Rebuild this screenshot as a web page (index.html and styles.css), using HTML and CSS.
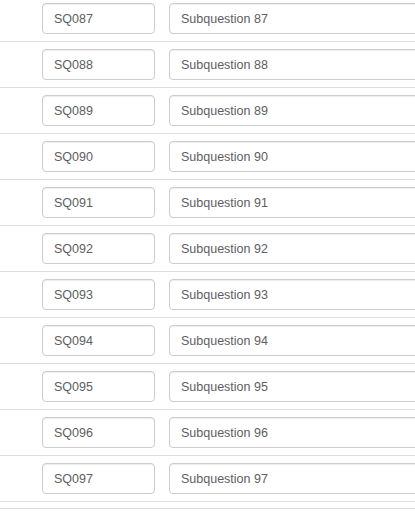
FILE: index.html
```html
<!DOCTYPE html>
<html lang="en">
<head>
    <meta charset="UTF-8">
    <meta name="viewport" content="width=device-width, initial-scale=1.0">
    <title>Subquestions</title>
    <link rel="stylesheet" href="styles.css">
</head>
<body>
    <div class="answers">
        <div class="row"><input class="field code" value="SQ087"><input class="field text" value="Subquestion 87"></div>
        <div class="row"><input class="field code" value="SQ088"><input class="field text" value="Subquestion 88"></div>
        <div class="row"><input class="field code" value="SQ089"><input class="field text" value="Subquestion 89"></div>
        <div class="row"><input class="field code" value="SQ090"><input class="field text" value="Subquestion 90"></div>
        <div class="row"><input class="field code" value="SQ091"><input class="field text" value="Subquestion 91"></div>
        <div class="row"><input class="field code" value="SQ092"><input class="field text" value="Subquestion 92"></div>
        <div class="row"><input class="field code" value="SQ093"><input class="field text" value="Subquestion 93"></div>
        <div class="row"><input class="field code" value="SQ094"><input class="field text" value="Subquestion 94"></div>
        <div class="row"><input class="field code" value="SQ095"><input class="field text" value="Subquestion 95"></div>
        <div class="row"><input class="field code" value="SQ096"><input class="field text" value="Subquestion 96"></div>
        <div class="row"><input class="field code" value="SQ097"><input class="field text" value="Subquestion 97"></div>
        <div class="footer"></div>
    </div>
</body>
</html>
```

FILE: styles.css
```css
body {
    font-family: "Liberation Sans", Arial, sans-serif;
    background-color: #fff;
    margin: 0;
    padding: 0;
    overflow: hidden;
}
.answers {
    margin-top: -4px;
}
.row {
    display: flex;
    gap: 14px;
    padding: 7px 0 7px 42px;
    border-bottom: 1px solid #ddd;
}
.footer {
    height: 6px;
    border-bottom: 1px solid #ddd;
}
.field {
    box-sizing: border-box;
    height: 31px;
    padding: 0 11px;
    border: 1px solid #ccc;
    border-radius: 4px;
    font-family: inherit;
    font-size: 12.5px;
    color: #5e5e5e;
    background-color: #fff;
    box-shadow: inset 0 1px 1px rgba(0, 0, 0, 0.075);
}
.field.code {
    width: 113px;
    flex: none;
}
.field.text {
    flex: 1;
    min-width: 0;
    margin-right: -20px;
}
```
